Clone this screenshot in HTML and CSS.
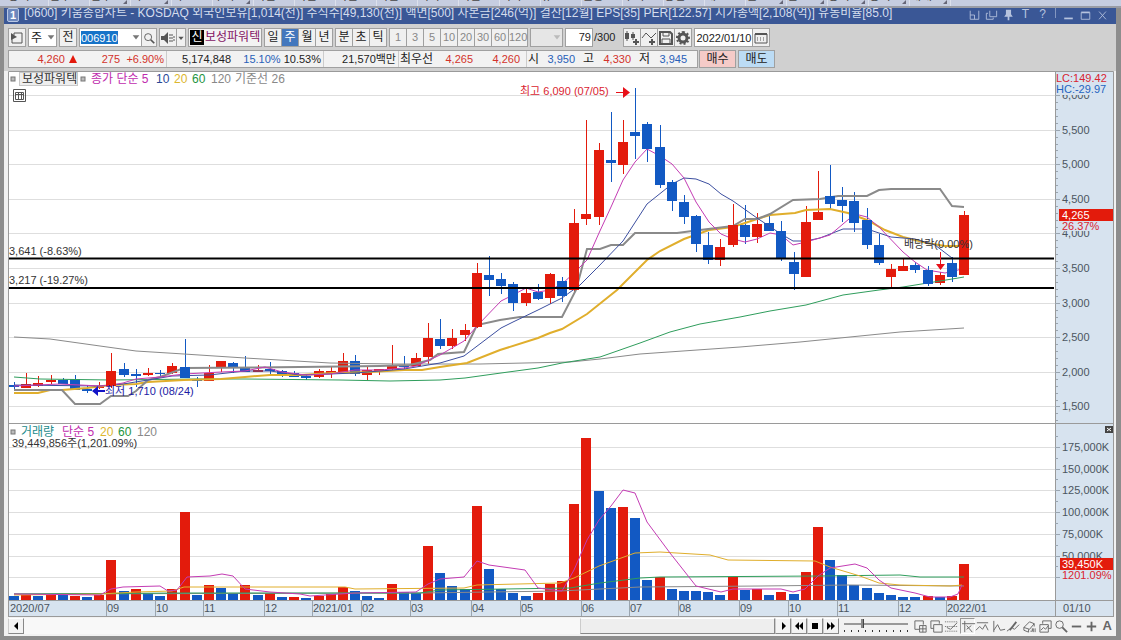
FILE: index.html
```html
<!DOCTYPE html>
<html lang="ko">
<head>
<meta charset="utf-8">
<title>키움종합차트</title>
<link rel="stylesheet" href="styles.css">
</head>
<body>
<nav class="menu">
  <button>종목</button><button>업무</button><button class="more">업무</button><button class="more">차트</button><button>차트</button><button class="more">투자</button><button>시간</button><button>시간</button><button>시간</button><button>시간</button><button>외국</button><button>기간</button><button>회사</button><button>뉴스</button><button>신용</button><button>투자</button><button>종합</button><button>매도</button><button class="more">신호</button><button class="more">잔고</button><button class="more">종목</button><button class="more">종목</button><button class="more">매매</button>
</nav>
<main class="window">
  <header class="titlebar">
    <span class="num">1</span>
    <h1>[0600] 키움종합차트 - KOSDAQ 외국인보유[1,014(천)] 주식수[49,130(천)] 액면[500] 자본금[246(억)] 결산[12월] EPS[35] PER[122.57] 시가총액[2,108(억)] 유동비율[85.0]</h1>
    <div class="wincontrols">
      <button aria-label="화면 복사"><svg viewBox="0 0 14 14"><path d="M2 2v10h10V2M2 7h5v5"/></svg></button>
      <button aria-label="겹치기"><svg viewBox="0 0 14 14"><path d="M5 2v7h8V2M3 5H1v7h8v-2"/></svg></button>
      <button aria-label="고정"><svg viewBox="0 0 14 14"><path class="solid" d="M4 1h6v5l2 3H2l2-3zM6 9h2v4H6z"/></svg></button>
      <button>T</button>
      <button>?</button>
      <i></i>
      <button aria-label="최소화"><svg viewBox="0 0 14 14"><path stroke-width="2" d="M2 11h10"/></svg></button>
      <button aria-label="최대화"><svg viewBox="0 0 14 14"><path d="M2 4v8h10V4"/><path stroke-width="2" d="M2 4h10"/></svg></button>
      <button aria-label="닫기"><svg viewBox="0 0 14 14"><path d="M3 3l8 9M11 3l-8 9"/></svg></button>
    </div>
  </header>

  <section class="tools">
    <button class="box w17" aria-label="목록"><svg viewBox="0 0 16 16"><path d="M5 3h8v10H3V9M5 3v2"/><path class="solid" d="M2 3l6 4-6 3z"/></svg></button>
    <label class="combo w28"><select aria-label="구분"><option>주</option></select><svg viewBox="0 0 12 16"><path class="solid" d="M2 6h8l-4 5z"/></svg></label>
    <button class="box w17">전</button>
    <div class="group">
      <label class="combo w63"><input class="code" aria-label="종목코드" value="006910"><svg viewBox="0 0 12 16"><path class="solid" d="M2 6h8l-4 5z"/></svg></label>
      <button class="box w16" aria-label="검색"><svg viewBox="0 0 16 16"><circle cx="7" cy="7" r="4"/><path stroke-width="2" d="M10 10l4 4"/></svg></button>
    </div>
    <div class="group">
      <button class="box w18" aria-label="소리"><svg viewBox="0 0 16 16"><path class="solid" d="M1 6h3l4-4v12l-4-4H1z"/><path stroke-dasharray="2 1" d="M10 4v8M12 4v8M14 6v5"/></svg></button>
      <button class="box w10" aria-label="소리 메뉴"><svg viewBox="0 0 12 16"><path class="solid" d="M2 6h8l-4 5z"/></svg></button>
    </div>
    <div class="stock"><b>신</b><span>보성파워텍</span></div>
    <div class="group"><button class="box w18">일</button><button class="box w18 on">주</button><button class="box w18">월</button><button class="box w18">년</button></div>
    <div class="group"><button class="box w18">분</button><button class="box w18">초</button><button class="box w18">틱</button></div>
    <div class="group dim"><button class="box w18">1</button><button class="box w18">3</button><button class="box w18">5</button><button class="box w18">10</button><button class="box w18">20</button><button class="box w18">30</button><button class="box w18">60</button><button class="box w20">120</button></div>
    <label class="combo w37 off"><select aria-label="분 단위" disabled><option></option></select><svg viewBox="0 0 12 16"><path class="solid" d="M2 6h8l-4 5z"/></svg></label>
    <div class="count"><input id="cnt" aria-label="표시 봉 수" value="79"><label for="cnt">/300</label></div>
    <div class="group">
      <button class="box w18" aria-label="봉 추가"><svg viewBox="0 0 16 16"><path class="solid" d="M1 3h4v6H1zM7 4h4v4H7z"/><path d="M3 1v10M9 2v8"/><path stroke-width="2" d="M9 12h6M12 9v6"/></svg></button>
      <button class="box w18" aria-label="지표 추가"><svg viewBox="0 0 16 16"><path d="M1 8l4-5 5 5 5-5"/><path stroke-width="2" d="M8 12h6M11 9v6"/></svg></button>
      <button class="box w18" aria-label="저장"><svg viewBox="0 0 16 16"><path stroke-width="2" d="M2 2h10l2 2v10H2z"/><path d="M5 2v4h6V2M4 14V9h8v5"/></svg></button>
      <button class="box w18" aria-label="설정"><svg viewBox="0 0 16 16"><circle cx="8" cy="8" r="4" stroke-width="3"/><path stroke-width="2" stroke-dasharray="2 2" d="M8 2a6 6 0 1 1-.1 0"/></svg></button>
    </div>
    <div class="group"><input class="date" aria-label="일자" value="2022/01/10"><button class="box w18" aria-label="달력"><svg viewBox="0 0 16 16"><path d="M2 4h12v9H2z"/><path stroke-width="2" d="M2 4h12" /><path stroke-dasharray="1 2" d="M4 8h9M4 10h9"/></svg></button></div>
  </section>

  <section class="quote">
    <div class="cells">
      <div class="cell c1"><span class="up">4,260 <i class="tri"></i></span><span class="up">275</span><span class="up">+6.90%</span></div>
      <div class="cell c2"><span>5,174,848</span><span class="rates"><em class="down">15.10%</em> 10.53%</span></div>
      <div class="cell c3"><span>21,570백만</span></div>
      <div class="cell c4"><span class="ko">최우선</span><span class="up">4,265</span><span class="up">4,260</span></div>
      <div class="cell c5"><span class="ko">시</span><span class="down">3,950</span><span class="ko">고</span><span class="up">4,330</span><span class="ko">저</span><span class="down">3,945</span></div>
    </div>
    <button class="buy">매수</button><button class="sell">매도</button>
  </section>

  <svg id="chart" class="chart" viewBox="8 71 1106 546" role="img" aria-label="보성파워텍 주봉 차트">
    <rect class="paper" x="8" y="71" width="1047" height="530"/>
    <rect class="axis" x="1055" y="71" width="59" height="546"/>
    <rect class="axis" x="8" y="601" width="1106" height="16"/>
    <g id="grid"></g>
    <g id="series"></g>
    <path class="level" d="M8 258.500H1054M8 288H1054"/>
    <path class="frame" d="M8.500 617V71.500H1113.500V617M8 423.500H1113M8 600.500H1113M1055.500 71V617M8 616.500H1113"/>
    <g id="axes"></g>

    <g class="ko">
      <rect class="knob" x="11" y="77" width="4" height="4"/>
      <rect class="tag" x="19.500" y="72.500" width="58" height="13"/>
      <text x="22" y="83">보성파워텍</text>
      <rect class="knob" x="81" y="77" width="4" height="4"/>
      <text class="m5" x="91" y="83">종가 단순 5</text>
      <text class="m10" x="156" y="83">10</text>
      <text class="m20" x="174" y="83">20</text>
      <text class="m60" x="192" y="83">60</text>
      <text class="m120" x="211" y="83">120</text>
      <text class="m120" x="235" y="83">기준선 26</text>
      <rect class="knob" x="11" y="430" width="4" height="4"/>
      <text class="teal" x="21" y="436">거래량</text>
      <text class="m5" x="62" y="436">단순 5</text>
      <text class="m20" x="100" y="436">20</text>
      <text class="m60" x="118" y="436">60</text>
      <text class="m120" x="137" y="436">120</text>
    </g>
    <path class="mini" d="M13.500 89.500h12v12h-12zM15.500 92.500h8v7h-8zM18.500 92v7M21.500 92v7M15 94.500h8"/>
    <text x="12" y="447">39,449,856주(1,201.09%)</text>
    <text x="9" y="255">3,641 (-8.63%)</text>
    <text x="9" y="284">3,217 (-19.27%)</text>
    <text class="hi" x="520" y="95">최고 6,090 (07/05)</text>
    <path class="hiarrow" d="M616 92h7v-5l7 5.500-7 5.500v-5h-7z"/>
    <text class="lo" x="105" y="395">최저 1,710 (08/24)</text>
    <path class="loarrow" d="M92 391l6-5v4h7v2h-7v4z"/>
    <text x="904" y="248">배당락(0.00%)</text>
    <path class="hiarrow" d="M940 252h1v12h4l-4.500 6-4.500-6h4z"/>

    <rect class="axis" x="1057" y="73" width="56" height="22"/>
    <text class="hi" x="1056" y="82">LC:149.42</text>
    <text class="down" x="1056" y="93">HC:-29.97</text>
    <rect class="axis" x="1059" y="221" width="54" height="10"/>
    <rect class="now" x="1059" y="209" width="54" height="12"/>
    <text class="nowtext" x="1062" y="219">4,265</text>
    <text class="hi" x="1062" y="230">26.37%</text>
    <rect class="now" x="1060" y="558" width="53" height="12"/>
    <text class="nowtext" x="1062" y="568">39,450K</text>
    <text class="hi" x="1062" y="579">1201.09%</text>
    <rect class="close" x="1105" y="426" width="8" height="7"/>
    <path class="closex" d="M1107 428l4 3M1111 428l-4 3"/>
    <text class="axistext" x="1063" y="612">01/10</text>
  </svg>

  <footer class="bottom">
    <button class="sq" aria-label="왼쪽"><svg viewBox="0 0 14 14"><path class="solid" d="M9 3v8L5 7z"/></svg></button>
    <div class="track"><div class="thumb"></div></div>
    <button class="sq" aria-label="오른쪽"><svg viewBox="0 0 14 14"><path class="solid" d="M6 3v8l4-4z"/></svg></button>
    <button class="sq" aria-label="뒤로"><svg viewBox="0 0 14 14"><path class="solid" d="M7 3v8L3 7zM11 3v8L7 7z"/></svg></button>
    <button class="sq" aria-label="정지"><svg viewBox="0 0 14 14"><path class="solid" d="M4 4h6v6H4z"/></svg></button>
    <button class="sq" aria-label="앞으로"><svg viewBox="0 0 14 14"><path class="solid" d="M3 3v8l4-4zM7 3v8l4-4z"/></svg></button>
    <input class="zoom" type="range" aria-label="확대" min="0" max="100" value="28">
    <div class="icons">
      <button aria-label="화면 추가"><svg viewBox="0 0 16 16"><path d="M7 11H2V2h9v4M7 7h7v7H7zM10.500 7v7M7 10.500h7"/></svg></button>
      <button aria-label="화면 겹침"><svg viewBox="0 0 16 16"><path d="M5 10H2V2h9v3M5 6h9v8H5z"/></svg></button>
      <button aria-label="격자"><svg viewBox="0 0 16 16"><path stroke-dasharray="1 1" d="M1 3h14M1 8h14M1 13h14"/><path d="M3 9l4 2 7-7"/></svg></button>
      <button class="pressed" aria-label="십자선"><svg viewBox="0 0 16 16"><path d="M4 2v12M1 5h14M11 7l-5 4M6 7l6 7"/></svg></button>
      <button aria-label="추세"><svg viewBox="0 0 16 16"><path d="M2 4h12M1 12l4-4 3 3 3-5 3 6"/></svg></button>
      <button aria-label="파동"><svg viewBox="0 0 16 16"><path d="M3 2v12M3 12l4-6 3 6 5-1"/></svg></button>
      <button aria-label="선 그리기"><svg viewBox="0 0 16 16"><path stroke-width="2" d="M4 12l7-9"/><path d="M1 13l5-4 3 2 5-5"/></svg></button>
      <button aria-label="모두 지우기"><svg viewBox="0 0 16 16"><path d="M2 9l6-6 5 2-5 6zM2 9v3l5 2v-3M13 5v3M9 13h2v-3M12 10v4M14 10v4"/></svg></button>
      <button aria-label="차트 복사"><svg viewBox="0 0 16 16"><path d="M5 5V2h9v8h-3M2 6h9v8H2zM3 12l3-3 2 2 3-4"/></svg></button>
      <button aria-label="돋보기"><svg viewBox="0 0 16 16"><circle cx="7" cy="6" r="4"/><path stroke-width="2" d="M10 9l5 5"/></svg></button>
      <button aria-label="축소"><svg viewBox="0 0 16 16"><path stroke-width="2" d="M3 8h10"/></svg></button>
      <button aria-label="확대"><svg viewBox="0 0 16 16"><path stroke-width="2" d="M3 8h10M8 3v10"/></svg></button>
      <button>A</button>
    </div>
  </footer>
</main>
<script src="chart.js"></script>
</body>
</html>
```

FILE: styles.css
```css
* { box-sizing: border-box; }
body {
  margin: 0;
  background: #f1f1f1;
  font: 11px/16px "Liberation Sans", "Noto Sans CJK KR", sans-serif;
  color: #222;
}
button, input, select { font: inherit; color: inherit; margin: 0; padding: 0; border: 0; border-radius: 0; background: none; min-width: 0; }
svg { fill: none; stroke: currentColor; }
.solid { fill: currentColor; stroke: none; }

.menu { display: flex; height: 8px; padding-left: 8px; overflow: hidden; background: #c6cde0; border-bottom: 2px solid #999ca5; align-items: flex-end; }
.menu button { position: relative; flex: 0 0 41px; height: 20px; line-height: 20px; font-size: 12px; text-align: left; color: #444; border-right: 1px solid #dde1ec; }
.menu .more::after { content: ""; position: absolute; right: 3px; bottom: 2px; border: 2px solid; border-color: transparent #667 #667 transparent; }

.window { border: solid #8d8d8d; border-width: 0 5px 4px 4px; background: #f1f1f1; }
.titlebar { display: flex; align-items: flex-end; height: 16px; padding: 0 5px 0 3px; overflow: hidden; background: #3a5796; color: #d5dded; }
.titlebar h1 { flex: 1; margin: 0; font-size: 12px; font-weight: 400; line-height: 18px; height: 20px; white-space: nowrap; padding-left: 5px; }
.num { width: 12px; height: 14px; margin-bottom: 2px; line-height: 12px; text-align: center; font-weight: 700; border: 1px solid #b9c8e4; border-radius: 2px; background: #6d88bd; color: #fff; }
.wincontrols { display: flex; align-items: flex-start; height: 16px; }
.wincontrols button { width: 17px; height: 13px; line-height: 11px; font-size: 12px; color: #b6c3de; }
.wincontrols svg { width: 13px; height: 12px; display: block; margin: 0 auto; }
.wincontrols i { width: 1px; height: 10px; margin: 0 4px; background: #8497c0; }

.tools, .quote { display: flex; background: #d0d0d0; padding-left: 4px; }
.tools { padding-top: 4px; gap: 2px; height: 25px; font-size: 12px; }
.tools > * { flex: none; }
.group { display: flex; height: 19px; }
.group .box + .box, .group label + .box, .group input + .box { margin-left: -1px; }
.box { height: 19px; line-height: 17px; border: 1px solid #a0a0a0; background: #f0f0f0; text-align: center; white-space: nowrap; }
.box svg { width: 16px; height: 16px; display: block; color: #555; }
.w10 { width: 10px; }
.box.w10 svg { width: 8px; }
.w16 { width: 16px; }
.box.w16 svg { width: 14px; }
.w17 { width: 18px; }
.w18 { width: 18px; }
.w20 { width: 20px; }
.w28 { width: 29px; }
.w37 { width: 33px; }
.w63 { width: 63px; }
.dim { font-size: 11px; color: #888; }
.on { background: #4377bd; color: #fff; }
.combo { display: grid; height: 19px; border: 1px solid #a0a0a0; background: #fff; }
.combo > * { grid-area: 1 / 1; }
.combo select { appearance: none; width: 100%; padding-left: 2px; }
.combo svg { width: 10px; height: 16px; justify-self: end; pointer-events: none; color: #777; }
.combo .code { width: 37px; height: 13px; margin: 2px 0 0 1px; font-size: 11px; background: #1673c8; color: #fff; }
.off { background: #e6e6e6; }
.off svg { color: #bbb; }
.stock { display: flex; height: 19px; padding: 1px; border: 1px solid #a0a0a0; background: #f3f3f3; color: #831363; }
.stock b { width: 14px; height: 15px; line-height: 15px; text-align: center; font-weight: 400; background: #000; color: #fff; }
.stock span { width: 56px; padding-left: 1px; white-space: nowrap; line-height: 15px; }
.count { display: flex; gap: 1px; margin-right: 6px; font-size: 11px; line-height: 19px; }
.count input { width: 28px; height: 19px; padding-right: 1px; border: 1px solid #a0a0a0; background: #fff; text-align: right; }
.date { width: 59px; height: 19px; padding-left: 1px; border: 1px solid #a0a0a0; background: #fff; font-size: 11px; }

.quote { height: 22px; padding-top: 1px; gap: 1px; }
.cells { display: flex; height: 18px; border: 1px solid #a0a0a0; background: #f2f2f2; }
.cell { display: grid; border-right: 1px solid #ccc; text-align: right; padding-right: 2px; white-space: nowrap; }
.cell:last-child { border: 0; }
.c1 { width: 158px; grid-template-columns: 68px 43px 1fr; }
.c2 { width: 157px; grid-template-columns: 64px 1fr; }
.c3 { width: 75px; }
.c4 { width: 128px; grid-template-columns: 34px 40px 1fr; padding-right: 6px; }
.c5 { width: 170px; grid-template-columns: 12px 36px 19px 37px 19px 37px; }
.cell .ko { font-size: 12px; }
.up { color: #d2322b; }
.down { color: #2860b8; }
.cell em { font-style: normal; }
.tri { display: inline-block; margin-left: 1px; border: 4px solid transparent; border-top: 0; border-bottom: 8px solid #e3190c; }
.buy, .sell { width: 37px; height: 18px; font-size: 12px; line-height: 16px; border: 1px solid #a0a0a0; background: #f5cbc8; }
.sell { background: #bcdcf5; margin-left: 1px; }

.chart { display: block; width: calc(100% - 6px); height: auto; margin-left: 4px; background: #fff; }
.chart text { stroke: none; fill: #333; font-size: 11px; }
.chart .ko text { font-size: 12px; }
.chart .paper { fill: #fff; stroke: none; }
.chart .axis { fill: #d7e3ef; stroke: none; }
.gridline { stroke: #dedede; }
.frame { stroke: #9a9a9a; }
.level { stroke: #000; stroke-width: 2; }
.tick { stroke: #9aa5b0; }
.chart .axistext { fill: #4b5560; }
.red { fill: #e31b0c; stroke: #e31b0c; }
.blue { fill: #1259c3; stroke: #1259c3; }
.body { stroke: none; }
.line { fill: none; }
.l5 { stroke: #c43cb4; }
.l10 { stroke: #3c4fa0; }
.l20 { stroke: #e0ae2c; }
.thick { stroke-width: 2; }
.l60 { stroke: #2f9d5c; }
.l120 { stroke: #8a8a8a; }
.chart .m5 { fill: #c02cae; }
.chart .m10 { fill: #2a4796; }
.chart .m20 { fill: #dcb62e; }
.chart .m60 { fill: #1d9440; }
.chart .m120 { fill: #888; }
.chart .teal { fill: #1d8c8c; }
.chart .hi { fill: #da2430; }
.chart .lo { fill: #1c1ca4; }
.chart .down { fill: #2464c0; }
.hiarrow { fill: #e81018; stroke: none; }
.loarrow { fill: #1414c8; stroke: none; }
.knob { fill: #bbb; stroke: #777; }
.tag { fill: #eee; stroke: #c8c8c8; }
.mini { stroke: #555; }
.now { fill: #e31b0c; stroke: none; }
.chart .nowtext { fill: #fff; }
.close { fill: #444; stroke: none; }
.closex { stroke: #fff; }

.bottom { display: flex; height: 19px; padding: 1px 1px 0 4px; align-items: flex-start; background: #f2f2f2; }
.sq { flex: none; width: 16px; height: 16px; border: 1px solid; border-color: #fff #888 #888 #ccc; background: #f3f3f3; color: #000; }
.sq svg { display: block; width: 14px; height: 14px; }
.track { flex: 1; display: flex; justify-content: flex-end; height: 16px; background: #f8f8f8; }
.thumb { width: 26%; border: 1px solid; border-color: #fff #888 #888 #ccc; background: #eee; }
.zoom { appearance: none; width: 64px; height: 15px; margin: 0 5px; background: linear-gradient(#999, #999) 0 5px / 100% 2px no-repeat, repeating-linear-gradient(90deg, #333 0 1px, transparent 1px 7px) 0 12px / 100% 2px no-repeat; }
.zoom::-webkit-slider-thumb { appearance: none; width: 3px; height: 9px; margin-top: -4px; background: #888; border-right: 1px solid #444; }
.icons { display: grid; grid-template-columns: repeat(13, 1fr); width: 202px; flex: none; color: #777; }
.icons button { height: 16px; line-height: 16px; font-size: 13px; font-weight: 700; color: #666; }
.icons svg { display: block; width: 15px; height: 15px; margin: 0 auto; }
.icons .pressed { border: 1px solid; border-color: #999 #fff #fff #999; }
```

FILE: chart.js
```js
const NS = 'http://www.w3.org/2000/svg';
function add(parent, name, attrs, text) {
  const el = document.createElementNS(NS, name);
  for (const k in attrs) el.setAttribute(k, attrs[k]);
  if (text !== undefined) el.textContent = text;
  document.getElementById(parent).appendChild(el);
}
const x0 = 14, step = 12.18;

// colour, high, body top, body bottom, low, volume colour, volume top
const bars = `
b 382 385 387 390 b 596|r 373 384 388 388 r 595|r 376 383 386 387 b 596|r 375 380 382 384 r 595
b 378 380 384 384 b 595|b 375 379 390 390 r 596|b 385 389 391 393 b 597|r 382 386 388 389 r 595
r 353 371 386 388 r 560|b 363 369 375 377 b 591|b 369 374 376 387 r 589|r 368 373 375 376 b 593
b 370 373 374 377 b 596|r 363 366 373 374 r 589|b 339 367 378 378 r 512|b 377 379 381 387 b 595
r 365 373 381 381 r 585|r 361 361 368 372 b 588|b 362 363 367 373 b 593|b 356 367 372 372 r 585
r 365 370 372 372 b 595|b 362 369 371 375 r 593|b 370 371 375 377 b 597|b 371 373 377 377 r 597
b 375 376 378 380 b 598|r 369 371 377 378 r 596|r 367 371 373 378 r 594|r 353 361 373 374 r 587
b 355 361 374 376 b 591|r 366 370 375 380 b 596|r 369 369 371 375 b 598|r 345 365 369 370 r 584
b 356 365 367 370 b 592|r 353 358 366 366 b 593|r 323 338 357 364 r 546|b 319 339 346 349 b 573
r 329 338 346 349 b 586|r 324 330 335 341 b 589|r 263 273 327 328 r 506|b 256 275 280 296 b 569
b 273 279 286 294 b 589|b 282 284 303 311 b 593|r 288 293 303 306 b 596|b 284 292 299 300 r 593
r 273 274 298 304 r 584|b 277 281 296 302 r 581|r 209 223 290 293 r 504|r 120 214 219 225 r 438
r 143 150 217 225 b 491|b 112 160 163 182 b 508|r 120 142 165 174 r 507|b 88 132 136 159 b 518
b 122 124 149 162 b 580|b 125 147 185 188 r 577|b 180 182 201 211 b 589|b 195 202 217 224 b 591
b 215 216 244 252 b 591|b 232 245 260 264 b 592|r 239 247 260 266 b 595|r 204 225 245 247 r 577
b 205 225 237 244 b 590|r 213 224 237 243 r 589|b 216 223 231 231 b 595|b 221 231 258 261 r 592
b 252 262 274 290 b 594|r 206 222 277 277 r 572|r 171 212 220 220 r 527|b 165 196 204 209 b 560
b 187 200 206 222 b 575|b 192 201 223 232 b 585|b 208 220 245 249 b 588|b 234 245 263 265 b 593
r 264 269 277 287 b 595|r 259 266 271 271 b 597|b 262 265 270 273 b 597|b 266 270 284 286 r 596
r 272 275 283 285 b 597|b 257 263 277 282 r 596|r 211 215 275 275 r 564`.trim().split(/[|\n]/);

const labels = ['6,000', '5,500', '5,000', '4,500', '4,000', '3,500', '3,000', '2,500', '2,000', '1,500'];
labels.forEach((t, i) => {
  const y = Math.round(95 + i * 34.6) + 0.5;
  add('grid', 'path', { class: 'gridline', d: `M9 ${y}H1055` });
  add('axes', 'path', { class: 'tick', d: `M1055 ${y}h5` });
  add('axes', 'text', { class: 'axistext', x: 1062, y: y + 3.5 }, t);
});
for (let y = 102; y < 423; y += 6.92) add('axes', 'path', { class: 'tick', d: `M1056 ${Math.round(y) + 0.5}h2` });

['175,000K', '150,000K', '125,000K', '100,000K', '75,000K', '50,000K', ''].forEach((t, i) => {
  const y = Math.round(447 + i * 21.7) + 0.5;
  add('grid', 'path', { class: 'gridline', d: `M9 ${y}H1055` });
  add('axes', 'path', { class: 'tick', d: `M1055 ${y}h5M1055 ${y - 11}h3` });
  add('axes', 'text', { class: 'axistext', x: 1062, y: y + 3.5 }, t);
});

[[9, '2020/07'], [106, '09'], [155, '10'], [203, '11'], [264, '12'], [312, '2021/01'], [361, '02'], [410, '03'],
 [471, '04'], [520, '05'], [581, '06'], [629, '07'], [678, '08'], [739, '09'], [788, '10'], [837, '11'],
 [898, '12'], [946, '2022/01']].forEach(([x, t]) => {
  if (x > 9) add('axes', 'path', { class: 'tick', d: `M${x + 0.5} 601v15` });
  add('axes', 'text', { class: 'axistext', x: x + 1, y: 612 }, t);
});

bars.forEach((row, i) => {
  const [c, hi, top, bot, lo, vc, v] = row.split(' ');
  const x = Math.round(x0 + i * step);
  const name = k => (k === 'r' ? 'red' : 'blue');
  add('series', 'path', { class: name(c), d: `M${x + 0.5} ${hi}V${lo}` });
  add('series', 'rect', { class: name(c) + ' body', x: x - 5, y: top, width: 10, height: bot - top });
  add('series', 'rect', { class: name(vc) + ' body', x: x - 5, y: v, width: 10, height: 600 - v });
});

const lines = {
  'l120': '14,337 50,339 100,346 136,351 184,354 245,358 330,363 395,364 480,364 570,362 600,359 640,354 740,347 800,342 860,336 900,332 964,328',
  'l60': '14,377 40,379 111,380 197,379 245,379 340,380 390,381 440,380 465,378 501,373 538,368 562,363 600,357 640,343 670,332 700,324 740,317 770,311 806,305 843,295 879,290 903,287 940,281 964,277',
  'l20 thick': '14,393 38,393 50,390 62,390 87,388 111,385 136,384 148,382 184,380 221,379 245,377 270,375 300,375 333,373 370,372 404,370 422,370 440,367 467,363 500,350 538,338 550,333 562,329 587,314 617,290 647,260 660,251 684,239 709,230 733,227 757,219 770,215 795,213 806,210 830,209 848,213 867,220 885,230 903,237 927,243 945,246 964,246',
  'l120 thick': '14,390 62,390 75,404 100,404 111,396 128,396 136,391 148,380 160,377 184,368 300,367 380,366 410,365 430,360 438,354 464,352 477,325 500,320 520,317 562,317 576,290 587,249 600,249 611,245 623,245 635,233 677,233 700,230 733,226 745,219 757,219 770,214 793,200 820,199 838,196 867,196 879,190 891,189 940,189 952,206 964,207',
  'l10': '14,385 100,386 123,384 148,380 172,376 209,375 245,371 270,371 300,375 330,374 355,373 380,371 404,369 440,363 464,356 501,328 513,322 538,310 562,298 580,285 599,266 623,241 647,204 672,184 684,178 696,179 709,184 721,194 733,201 757,218 781,234 793,241 806,241 820,238 843,229 867,229 891,237 915,239 935,245 952,258',
  'l5': '14,386 60,384 100,386 111,385 123,383 136,379 160,377 184,374 221,372 245,371 265,367 282,372 306,375 330,374 355,370 380,370 404,368 416,366 440,355 464,341 477,326 501,301 513,295 526,288 538,292 550,290 562,284 574,273 587,260 599,233 611,207 623,180 635,162 647,149 660,156 672,164 684,178 696,202 709,222 721,234 733,239 745,242 757,239 770,233 781,235 793,245 806,242 830,235 843,224 855,214 867,217 879,227 903,252 915,262 927,270 945,273 958,270 964,268'
};
const volumeLines = {
  'l120': '14,594 420,593 560,591 600,589 640,587 760,586 850,585 964,586',
  'l60': '14,594 184,593 420,593 440,590 570,588 600,583 640,578 660,577 820,576 900,575 920,577 964,577',
  'l20': '14,595 100,594 136,592 172,591 184,587 345,587 355,589 464,588 477,585 560,583 574,578 599,566 635,553 660,552 710,555 728,560 815,561 830,567 860,576 879,583 900,585 950,586 962,585',
  'l5': '14,594 100,595 111,589 123,587 160,586 168,591 177,590 187,577 210,576 222,574 233,576 245,589 270,592 300,594 310,596 355,593 416,592 428,584 440,579 464,577 477,561 489,565 525,570 538,588 562,591 574,570 587,540 599,520 611,506 623,490 635,493 647,522 670,553 696,586 721,592 733,589 781,589 793,592 805,589 818,576 830,568 855,564 867,568 879,580 891,588 915,593 930,597 950,597 958,594 962,585'
};
for (const set of [lines, volumeLines])
  for (const k in set) add('series', 'polyline', { class: 'line ' + k, points: set[k] });

// tall candles cover the averages that cross them
for (const i of [8, 14, 38, 41, 44, 45, 46, 48, 50, 51, 52, 53, 54, 55, 56, 57, 58, 59, 60, 61, 63, 65, 67, 69, 70, 71, 75, 77, 78]) {
  const [c, , top, bot] = bars[i].split(' ');
  add('series', 'rect', { class: (c === 'r' ? 'red' : 'blue') + ' body', x: Math.round(x0 + i * step) - 5, y: top, width: 10, height: bot - top });
}
```
